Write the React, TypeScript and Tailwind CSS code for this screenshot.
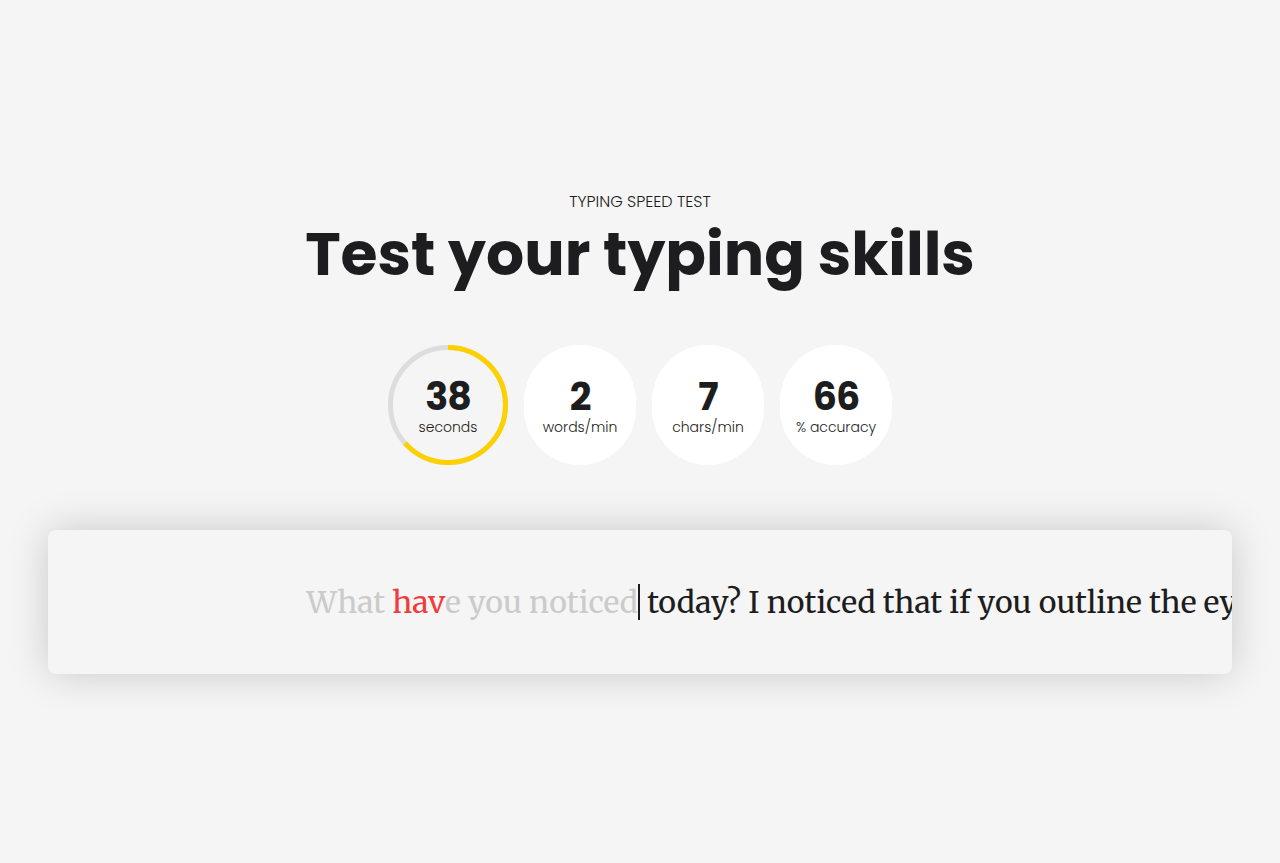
import { useState } from 'react'

const sans = "font-['Poppins','Inter','Open_Sans',sans-serif]"

function Stat({ value, label }: { value: string | number; label: string }) {
  return (
    <div className="w-[112px] h-[120px] rounded-full bg-white flex flex-col items-center justify-center pt-[2px]">
      <span className="text-[38px] leading-[40px] font-bold text-[#1d1d20] tracking-tight">{value}</span>
      <span className="text-[14px] leading-[18px] font-light text-[#1d1d20] mt-[1px]">{label}</span>
    </div>
  )
}

function Timer({ seconds, total }: { seconds: number; total: number }) {
  const r = 57.5
  const c = 2 * Math.PI * r
  const done = (seconds / total) * c
  return (
    <div className="relative w-[120px] h-[120px] flex flex-col items-center justify-center pt-[2px]">
      <svg className="absolute inset-0 -rotate-90" width="120" height="120" viewBox="0 0 120 120">
        <circle cx="60" cy="60" r={r} fill="none" stroke="#dddddd" strokeWidth="5" />
        <circle cx="60" cy="60" r={r} fill="none" stroke="#fdd000" strokeWidth="5" strokeDasharray={`${done} ${c}`} />
      </svg>
      <span className="relative text-[38px] leading-[40px] font-bold text-[#1d1d20] tracking-tight">{seconds}</span>
      <span className="relative text-[14px] leading-[18px] font-light text-[#1d1d20] mt-[1px]">seconds</span>
    </div>
  )
}

export default function App() {
  const [typed] = useState('What have you noticed')
  const rest = ' today? I noticed that if you outline the eyes of a drawing it makes them pop'

  return (
    <div className={`min-h-screen bg-[#f5f5f5] ${sans} text-[#1d1d20]`}>
      <div className="flex flex-col items-center pt-[190px]">
        <p className="text-[16px] leading-[24px] font-light uppercase">Typing speed test</p>
        <h1 className="text-[60px] leading-[80px] font-bold">Test your typing skills</h1>

        <div className="flex items-center gap-4 mt-[51px]">
          <Timer seconds={38} total={60} />
          <Stat value={2} label="words/min" />
          <Stat value={7} label="chars/min" />
          <Stat value={66} label="% accuracy" />
        </div>
      </div>

      <div className="mx-12 mt-[65px] h-[144px] rounded-lg bg-[#f5f5f5] shadow-[0_0_40px_0_rgba(0,0,0,0.18)] overflow-hidden flex items-center">
        <div className="flex w-full font-['Merriweather','DejaVu_Serif',serif] text-[30.25px] leading-[40px] whitespace-pre">
          <div className="w-1/2 flex justify-end overflow-hidden">
            <span className="text-[#cbcbcb]">
              {typed.slice(0, 5)}
              <span className="text-[#ef3c3c]">{typed.slice(5, 8)}</span>
              {typed.slice(8)}
            </span>
            <span className="w-[2px] h-[36px] bg-[#1d1d20] self-center shrink-0"></span>
          </div>
          <div className="w-1/2 overflow-hidden text-[#1d1d20]">{rest}</div>
        </div>
      </div>
    </div>
  )
}
